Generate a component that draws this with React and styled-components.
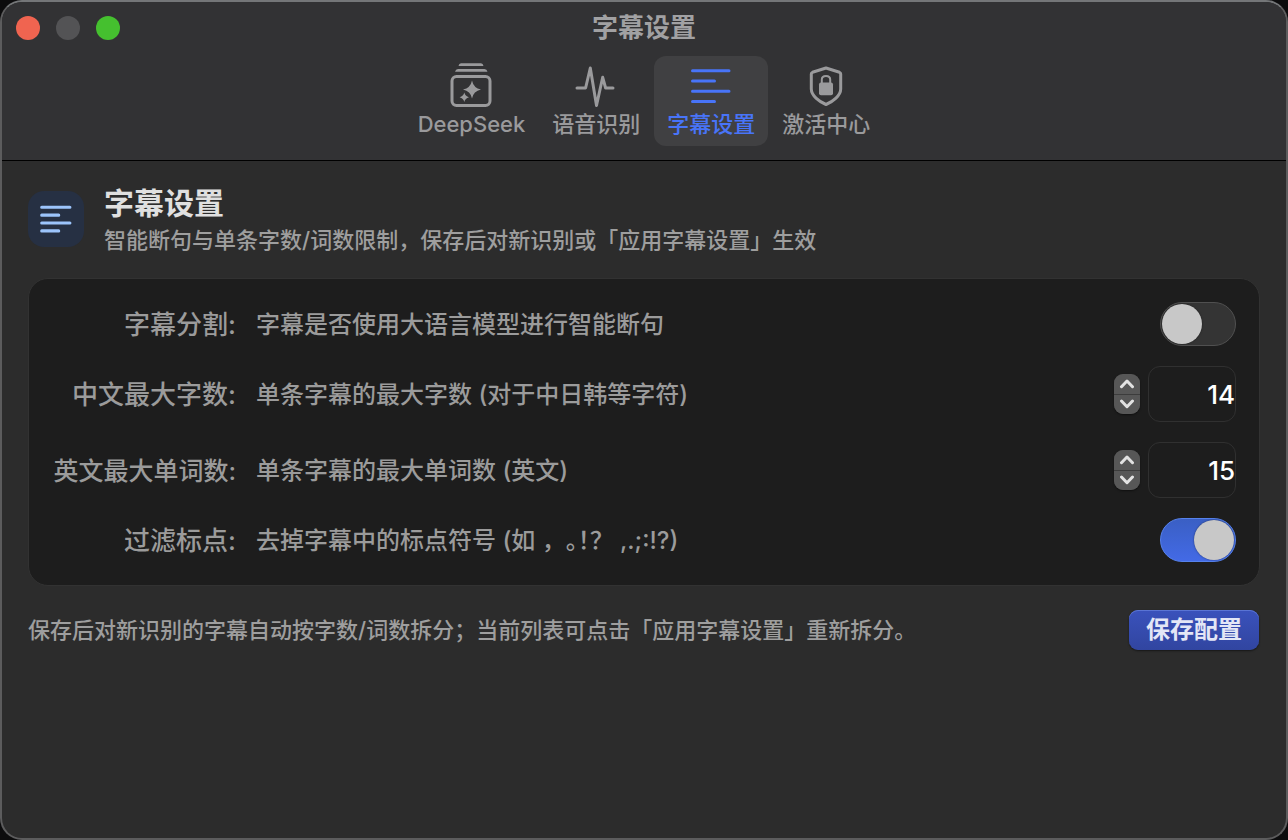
import React, { useState } from "react";
import styled, { createGlobalStyle } from "styled-components";

const GlobalStyle = createGlobalStyle`
  * {
    box-sizing: border-box;
  }

  body {
    margin: 0;
    background-color: #0c0c0d;
    font-family: Inter, "Noto Sans CJK SC", sans-serif;
  }

  button,
  input {
    font-family: inherit;
  }
`;

const Window = styled.div`
  display: flex;
  flex-direction: column;
  min-height: 100vh;
  border: 2px solid #5c5c5d;
  border-top-color: #747678;
  border-radius: 22px;
  overflow: hidden;
  background-color: #2c2c2c;
  color: #9b9b9b;
`;

const Toolbar = styled.header`
  background-color: #323234;
  border-bottom: 1px solid #000000;
  padding-bottom: 14px;
`;

const TitleBar = styled.div`
  display: grid;
  grid-template-columns: 1fr auto 1fr;
  align-items: center;
  height: 54px;
  padding: 0 14px 2px;
`;

const TrafficLights = styled.div`
  display: flex;
  gap: 16px;
`;

const Light = styled.button`
  width: 24px;
  height: 24px;
  padding: 0;
  border: none;
  border-radius: 50%;
  background-color: ${(props) => props.$color};
`;

const WindowTitle = styled.div`
  font-size: 26px;
  line-height: 32px;
  font-weight: 700;
  color: #a1a1a3;
`;

const Tabs = styled.nav`
  display: flex;
  justify-content: center;
  gap: 1px;
`;

const Tab = styled.button`
  display: flex;
  flex-direction: column;
  align-items: center;
  gap: 2px;
  padding: 8px 13px;
  border: none;
  border-radius: 12px;
  background-color: ${(props) => (props.$active ? "#404042" : "transparent")};
  color: ${(props) => (props.$active ? "#4874f8" : "#9a9a9c")};
  font-size: 22px;
  line-height: 28px;
  font-weight: 500;

  svg {
    overflow: visible;
  }
`;

const Content = styled.main`
  padding: 24px 26px;
`;

const Header = styled.div`
  display: flex;
  align-items: center;
  gap: 20px;
  margin-bottom: 25px;
`;

const HeaderIcon = styled.div`
  display: flex;
  align-items: center;
  justify-content: center;
  flex: none;
  width: 56px;
  height: 56px;
  border-radius: 16px;
  background-color: #263043;
  color: #9cc4fb;
`;

const HeaderText = styled.div`
  display: flex;
  flex-direction: column;
  gap: 6px;
`;

const Heading = styled.h1`
  margin: 0;
  font-size: 30px;
  line-height: 36px;
  font-weight: 700;
  color: #e0e0e0;
`;

const Note = styled.p`
  margin: 0;
  font-size: 22px;
  line-height: 26px;
  font-weight: 500;
  color: #9e9e9e;
`;

const Card = styled.section`
  display: flex;
  flex-direction: column;
  gap: 20px;
  padding: 23px;
  border: 1px solid #323232;
  border-radius: 20px;
  background-color: #1d1d1d;
`;

const Row = styled.div`
  display: grid;
  grid-template-columns: 184px 1fr auto;
  align-items: center;
  column-gap: 20px;
`;

const Label = styled.label`
  padding-top: 2px;
  text-align: right;
  white-space: nowrap;
  font-size: ${(props) => (props.$compact ? "25px" : "26px")};
  line-height: 32px;
  font-weight: 500;
`;

const Description = styled.span`
  padding-top: 2px;
  font-size: 24px;
  line-height: 32px;
  font-weight: 500;
`;

const FullWidthMark = styled.span`
  text-spacing-trim: space-all;
`;

const HalfWidthMarks = styled.span`
  font-feature-settings: "halt";
`;

const Switch = styled.input`
  appearance: none;
  display: flex;
  justify-content: flex-start;
  width: 76px;
  height: 44px;
  margin: 0;
  padding: 1px;
  border: 1px solid #505050;
  border-radius: 22px;
  background: #343434;

  &::before {
    content: "";
    width: 40px;
    height: 40px;
    border-radius: 50%;
    background-color: #c8c8c8;
    box-shadow: 0 0 2px rgba(0, 0, 0, 0.5);
  }

  &:checked {
    justify-content: flex-end;
    border-color: #5682ec;
    background: linear-gradient(#3a5fc4, #436ae6);
  }
`;

const NumberField = styled.div`
  display: flex;
  align-items: center;
  gap: 8px;
`;

const Stepper = styled.div`
  display: flex;
  flex-direction: column;
  gap: 1px;
  width: 26px;
  height: 40px;
  border-radius: 9px;
  overflow: hidden;
  background-color: #3c3c3c;
  box-shadow: 0 1px 2px rgba(0, 0, 0, 0.5);
`;

const StepButton = styled.button`
  display: flex;
  align-items: center;
  justify-content: center;
  flex: 1;
  padding: 0;
  border: none;
  background-color: #575757;
  color: #e2e2e2;
`;

const NumberInput = styled.input`
  width: 88px;
  height: 56px;
  padding: 0;
  border: 1px solid #303030;
  border-radius: 12px;
  outline: none;
  background-color: transparent;
  color: #ffffff;
  text-align: right;
  font-size: 26px;
  line-height: 32px;
  font-weight: 500;
`;

const Footer = styled.footer`
  display: flex;
  align-items: center;
  justify-content: space-between;
  gap: 20px;
  margin-top: 24px;
  padding-right: 1px;
`;

const SaveButton = styled.button`
  flex: none;
  height: 40px;
  padding: 0 17px;
  border: none;
  border-radius: 9px;
  background: linear-gradient(#3a52bc, #3145a0);
  box-shadow:
    inset 0 1px 0 #5a74d4,
    0 1px 2px rgba(0, 0, 0, 0.5);
  color: #e3e6f6;
  font-size: 24px;
  line-height: 32px;
  font-weight: 700;
`;

const DeepSeekIcon = () => (
  <svg width="44" height="44" viewBox="0 0 44 44" fill="currentColor">
    <path d="M12 -0.7h20q2 0 2.5 2.7h-25q.5-2.7 2.5-2.7z" />
    <path d="M9 5h26.500q2.300 0 3 2.800h-32.500q.7-2.800 3-2.800z" />
    <rect
      x="3"
      y="12.500"
      width="38"
      height="29"
      rx="4.500"
      fill="none"
      stroke="currentColor"
      strokeWidth="3"
    />
    <path d="M23 16.500Q24.500 24 32 25.500Q24.500 27 23 34.500Q21.500 27 14 25.500Q21.500 24 23 16.500z" />
    <path d="M15.300 28.600Q16.200 32.400 20 33.300Q16.200 34.200 15.300 38Q14.400 34.200 10.600 33.300Q14.400 32.400 15.300 28.600z" />
  </svg>
);

const WaveIcon = () => (
  <svg width="44" height="44" viewBox="0 0 44 44" fill="none">
    <path
      d="M3 24H11.600L16.300 4L22.500 41.500L28.700 13.300L31.600 24H39"
      stroke="currentColor"
      strokeWidth="3"
      strokeLinecap="round"
      strokeLinejoin="round"
    />
  </svg>
);

const LinesIcon = ({ size = 44, stroke = 3 }) => (
  <svg width={size} height={size} viewBox="0 0 44 44" fill="none">
    <path
      d="M3.500 6.700H40M3.500 17H25.500M3.500 27.200H40M3.500 37.400H25.500"
      stroke="currentColor"
      strokeWidth={stroke}
      strokeLinecap="round"
    />
  </svg>
);

const ShieldIcon = () => (
  <svg width="44" height="44" viewBox="0 0 44 44" fill="none">
    <path
      d="M22 4L35.500 8.300Q36.700 8.800 36.700 10V25C36.700 31.500 29 37.500 22 40.500C15 37.500 7.300 31.500 7.300 25V10Q7.300 8.800 8.500 8.300Z"
      stroke="currentColor"
      strokeWidth="3"
      strokeLinejoin="round"
    />
    <rect x="15" y="18.600" width="14" height="12.600" rx="2" fill="currentColor" />
    <path
      d="M17.800 19V15.500C17.800 10.700 26.200 10.700 26.200 15.500V19"
      stroke="currentColor"
      strokeWidth="2"
    />
  </svg>
);

const Chevron = ({ down }) => (
  <svg width="16" height="10" viewBox="0 0 16 10" fill="none">
    <path
      d={down ? "M2.500 2L8 7.700L13.500 2" : "M2.500 7.700L8 2L13.500 7.700"}
      stroke="currentColor"
      strokeWidth="3"
      strokeLinecap="round"
      strokeLinejoin="round"
    />
  </svg>
);

const tabs = [
  { name: "DeepSeek", Icon: DeepSeekIcon },
  { name: "语音识别", Icon: WaveIcon },
  { name: "字幕设置", Icon: LinesIcon },
  { name: "激活中心", Icon: ShieldIcon },
];

const StepperInput = ({ id, value, onChange }) => (
  <NumberField>
    <Stepper>
      <StepButton aria-label="增加" onClick={() => onChange(value + 1)}>
        <Chevron />
      </StepButton>
      <StepButton aria-label="减少" onClick={() => onChange(value - 1)}>
        <Chevron down />
      </StepButton>
    </Stepper>
    <NumberInput
      id={id}
      inputMode="numeric"
      value={value}
      onChange={(e) => onChange(Number(e.target.value) || 0)}
    />
  </NumberField>
);

export default () => {
  const [activeTab, setActiveTab] = useState("字幕设置");
  const [split, setSplit] = useState(false);
  const [maxChars, setMaxChars] = useState(14);
  const [maxWords, setMaxWords] = useState(15);
  const [filter, setFilter] = useState(true);

  return (
    <>
      <GlobalStyle />
      <Window>
        <Toolbar>
          <TitleBar>
            <TrafficLights>
              <Light $color="#f06450" aria-label="关闭" />
              <Light $color="#535355" aria-label="最小化" />
              <Light $color="#45c02f" aria-label="缩放" />
            </TrafficLights>
            <WindowTitle>字幕设置</WindowTitle>
          </TitleBar>
          <Tabs>
            {tabs.map(({ name, Icon }) => (
              <Tab
                key={name}
                $active={name === activeTab}
                onClick={() => setActiveTab(name)}
              >
                <Icon />
                {name}
              </Tab>
            ))}
          </Tabs>
        </Toolbar>
        <Content>
          <Header>
            <HeaderIcon>
              <LinesIcon size={34} stroke={4} />
            </HeaderIcon>
            <HeaderText>
              <Heading>字幕设置</Heading>
              <Note>
                智能断句与单条字数/词数限制，保存后对新识别或「应用字幕设置」生效
              </Note>
            </HeaderText>
          </Header>
          <Card>
            <Row>
              <Label htmlFor="split">字幕分割:</Label>
              <Description>字幕是否使用大语言模型进行智能断句</Description>
              <Switch
                id="split"
                type="checkbox"
                checked={split}
                onChange={(e) => setSplit(e.target.checked)}
              />
            </Row>
            <Row>
              <Label htmlFor="max-chars">中文最大字数:</Label>
              <Description>单条字幕的最大字数 (对于中日韩等字符)</Description>
              <StepperInput
                id="max-chars"
                value={maxChars}
                onChange={setMaxChars}
              />
            </Row>
            <Row>
              <Label htmlFor="max-words" $compact>
                英文最大单词数:
              </Label>
              <Description>单条字幕的最大单词数 (英文)</Description>
              <StepperInput
                id="max-words"
                value={maxWords}
                onChange={setMaxWords}
              />
            </Row>
            <Row>
              <Label htmlFor="filter">过滤标点:</Label>
              <Description>
                去掉字幕中的标点符号 (如 <FullWidthMark>，</FullWidthMark>
                <HalfWidthMarks>。！</HalfWidthMarks>？ ,.;:!?)
              </Description>
              <Switch
                id="filter"
                type="checkbox"
                checked={filter}
                onChange={(e) => setFilter(e.target.checked)}
              />
            </Row>
          </Card>
          <Footer>
            <Note>
              保存后对新识别的字幕自动按字数/词数拆分；当前列表可点击「应用字幕设置」重新拆分。
            </Note>
            <SaveButton>保存配置</SaveButton>
          </Footer>
        </Content>
      </Window>
    </>
  );
};
